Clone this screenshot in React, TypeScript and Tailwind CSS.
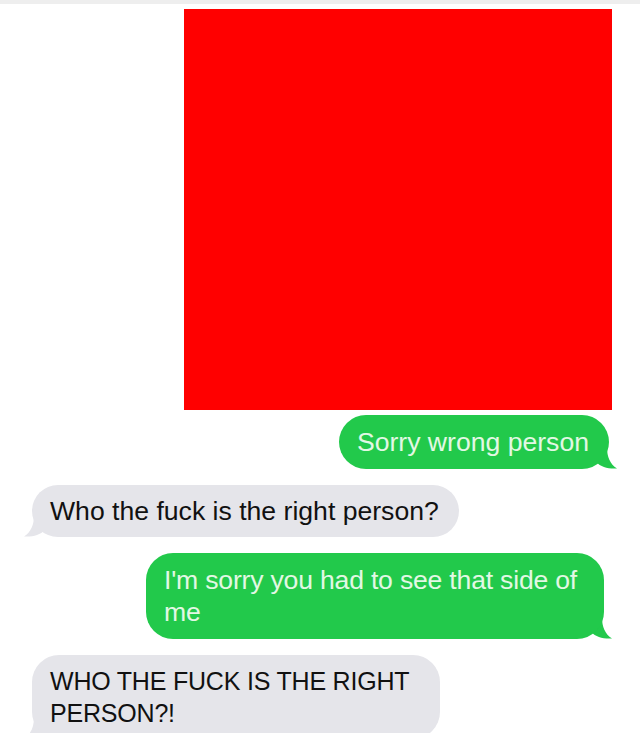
import type { ReactNode } from 'react';

const font = { fontFamily: '"Liberation Sans", Arial, sans-serif' };

function Tail({ side, color }: { side: 'left' | 'right'; color: string }) {
  const right = side === 'right';
  return (
    <svg
      width="22"
      height="22"
      viewBox="0 0 22 22"
      className={right ? 'absolute -right-[8px] bottom-0' : 'absolute -left-[8px] bottom-0'}
      style={right ? undefined : { transform: 'scaleX(-1)' }}
    >
      <path d="M0 0 H12 C12 10 15 17 22 21.5 C13 22 6 20 1 15 Z" fill={color} />
    </svg>
  );
}

function Sent({ children, className = '' }: { children: ReactNode; className?: string }) {
  return (
    <div className={`relative self-end ${className}`}>
      <div className="relative z-10 whitespace-nowrap rounded-[27px] bg-[#22c94b] pl-[18px] pr-[20px] py-[11px] text-[26.6px] leading-[32px] text-[#e2f8e4]">
        {children}
      </div>
      <Tail side="right" color="#22c94b" />
    </div>
  );
}

function Received({ children, className = '' }: { children: ReactNode; className?: string }) {
  return (
    <div className={`relative self-start ${className}`}>
      <div className="relative z-10 whitespace-nowrap rounded-[27px] bg-[#e5e5ea] pl-[18px] pr-[20px] py-[10px] text-[26.6px] leading-[32px] text-[#111]">
        {children}
      </div>
      <Tail side="left" color="#e5e5ea" />
    </div>
  );
}

export default function App() {
  return (
    <div className="h-[733px] w-[640px] overflow-hidden bg-white" style={font}>
      <div className="h-[4px] bg-[#eeeeee]" />
      <div className="flex flex-col pl-[32px] pr-[31px] pt-[5px]">
        <div className="mr-[-3px] h-[401px] w-[428px] self-end bg-[#ff0000]" />
        <Sent className="mt-[5px]">Sorry wrong person</Sent>
        <Received className="mt-[16px]">Who the fuck is the right person?</Received>
        <Sent className="mt-[16px] mr-[5px] w-[458px]">
          <span className="tracking-[-0.2px]">
            I'm sorry you had to see that side of
            <br />
            me
          </span>
        </Sent>
        <Received className="mt-[16px] w-[408px]">
          <span className="text-[25px] tracking-[-0.2px]">
            WHO THE FUCK IS THE RIGHT
            <br />
            PERSON?!
          </span>
        </Received>
      </div>
    </div>
  );
}
